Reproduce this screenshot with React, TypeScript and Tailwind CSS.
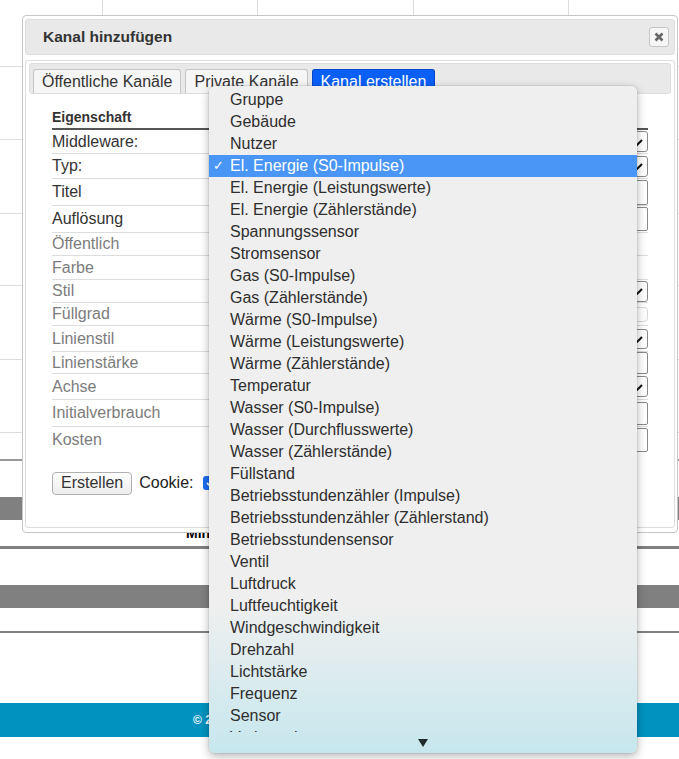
import React from "react";

type Row = {
  label: string;
  h: string;
  muted: boolean;
  ctl: "select" | "input" | "disabled" | "none";
  ch?: string;
};

const rows: Row[] = [
  { label: "Middleware:", h: "h-[24px]", muted: false, ctl: "select", ch: "h-[21px]" },
  { label: "Typ:", h: "h-[25px]", muted: false, ctl: "select", ch: "h-[21px]" },
  { label: "Titel", h: "h-[27px]", muted: false, ctl: "input", ch: "h-[25px]" },
  { label: "Auflösung", h: "h-[27px]", muted: false, ctl: "input", ch: "h-[24px]" },
  { label: "Öffentlich", h: "h-[23px]", muted: true, ctl: "none" },
  { label: "Farbe", h: "h-[24px]", muted: true, ctl: "none" },
  { label: "Stil", h: "h-[23px]", muted: true, ctl: "select", ch: "h-[21px]" },
  { label: "Füllgrad", h: "h-[23px]", muted: true, ctl: "disabled", ch: "h-[15px]" },
  { label: "Linienstil", h: "h-[26px]", muted: true, ctl: "select", ch: "h-[20px]" },
  { label: "Linienstärke", h: "h-[22px]", muted: true, ctl: "input", ch: "h-[22px]" },
  { label: "Achse", h: "h-[26px]", muted: true, ctl: "select", ch: "h-[21px]" },
  { label: "Initialverbrauch", h: "h-[27px]", muted: true, ctl: "input", ch: "h-[23px]" },
  { label: "Kosten", h: "h-[26px]", muted: true, ctl: "input", ch: "h-[24px]" },
];

const options = [
  "Gruppe",
  "Gebäude",
  "Nutzer",
  "El. Energie (S0-Impulse)",
  "El. Energie (Leistungswerte)",
  "El. Energie (Zählerstände)",
  "Spannungssensor",
  "Stromsensor",
  "Gas (S0-Impulse)",
  "Gas (Zählerstände)",
  "Wärme (S0-Impulse)",
  "Wärme (Leistungswerte)",
  "Wärme (Zählerstände)",
  "Temperatur",
  "Wasser (S0-Impulse)",
  "Wasser (Durchflusswerte)",
  "Wasser (Zählerstände)",
  "Füllstand",
  "Betriebsstundenzähler (Impulse)",
  "Betriebsstundenzähler (Zählerstand)",
  "Betriebsstundensensor",
  "Ventil",
  "Luftdruck",
  "Luftfeuchtigkeit",
  "Windgeschwindigkeit",
  "Drehzahl",
  "Lichtstärke",
  "Frequenz",
  "Sensor",
  "Verbrauch",
];

const gridRows = ["h-[67px]", "h-[73px]", "h-[74px]", "h-[72px]", "h-[74px]", "h-[73px]"];

// page behind the dialog
function Page() {
  return (
    <div className="flex flex-col">
      {gridRows.map((h, i) => (
        <div
          key={i}
          className={`grid ${h} grid-cols-[103px_155px_156px_155px_1fr] border-b border-[#dddddd]`}
        >
          <div className="border-r border-[#dddddd]" />
          <div className="border-r border-[#dddddd]" />
          <div className="border-r border-[#dddddd]" />
          <div className="border-r border-[#dddddd]" />
          <div />
        </div>
      ))}
      <div className="h-[26px]" />
      <div className="h-[2px] bg-[#999999]" />
      <div className="h-[36px]" />
      <div className="h-[23px] bg-[#808080]" />
      <div className="flex h-[26px] items-center pl-[186px] text-[14px] font-bold text-black">
        Min
      </div>
      <div className="h-[3px] bg-[#808080]" />
      <div className="h-[36px]" />
      <div className="h-[23px] bg-[#808080]" />
      <div className="h-[23px]" />
      <div className="h-[2px] bg-[#808080]" />
      <div className="h-[70px]" />
      <div className="flex h-[34px] items-center bg-[#0093bf] pl-[193px] text-[12px] font-bold text-white">
        © 2017
      </div>
    </div>
  );
}

function SelectBox({ ch }: { ch: string }) {
  return (
    <div
      className={`relative ${ch} w-[190px] rounded-[3px] border border-[#8a8a8a] bg-white`}
    >
      <svg
        className="absolute right-[3px] top-1/2 -translate-y-1/2"
        width="11"
        height="8"
        viewBox="0 0 11 8"
      >
        <path d="M1 4 L4 7 L9 2" fill="none" stroke="#111" strokeWidth="2" />
      </svg>
    </div>
  );
}

function Control({ row }: { row: Row }) {
  if (row.ctl === "select") return <SelectBox ch={row.ch!} />;
  if (row.ctl === "input")
    return <div className={`${row.ch} w-[190px] rounded-[2px] border border-[#8a8a8a] bg-white`} />;
  if (row.ctl === "disabled")
    return <div className={`${row.ch} w-[190px] rounded-[4px] border border-[#d8d8d8] bg-white`} />;
  return null;
}

function Dialog() {
  return (
    <div className="absolute left-[22px] top-[15px] flex h-[518px] w-[656px] flex-col rounded-[4px] border border-[#c5c5c5] bg-white px-[2px] pb-[4px] pt-[3px]">
      {/* Title bar */}
      <div className="flex h-[36px] items-center justify-between rounded-[3px] border border-[#dddddd] bg-[#e9e9e9] pl-[17px] pr-[5px]">
        <span className="text-[15.5px] font-bold text-[#333333]">Kanal hinzufügen</span>
        <button className="flex h-[20px] w-[20px] items-center justify-center rounded-[3px] border border-[#c5c5c5] bg-[#f6f6f6]">
          <svg width="10" height="10" viewBox="0 0 10 10">
            <path d="M1.5 1.5 L8.5 8.5 M8.5 1.5 L1.5 8.5" stroke="#666" strokeWidth="2.6" />
          </svg>
        </button>
      </div>

      {/* Tabs panel */}
      <div className="mt-[5px] flex flex-1 flex-col rounded-[3px] border border-[#dddddd] px-[3px] pt-[2px]">
        <div className="flex h-[31px] gap-[4px] rounded-[3px] border border-[#dddddd] bg-[#e9e9e9] pl-[3px] pt-[5px]">
          <div className="flex h-[24px] items-center rounded-t-[3px] border border-b-0 border-[#c5c5c5] bg-[#f6f6f6] px-[8px] text-[16px] text-[#333333]">
            Öffentliche Kanäle
          </div>
          <div className="flex h-[24px] items-center rounded-t-[3px] border border-b-0 border-[#c5c5c5] bg-[#f6f6f6] px-[8px] text-[16px] text-[#333333]">
            Private Kanäle
          </div>
          <div className="flex h-[24px] items-center rounded-t-[3px] border border-b-0 border-[#0047cc] bg-[#0a60f6] px-[8px] text-[16px] text-white">
            Kanal erstellen
          </div>
        </div>

        <div className="px-[23px] pt-[12px]">
          <div className="flex h-[24px] items-center border-b-2 border-[#555555] text-[14px] font-bold text-[#333333]">
            Eigenschaft
          </div>
          {rows.map((r, i) => (
            <div
              key={r.label}
              className={`flex ${r.h} items-center justify-between ${
                i < rows.length - 1 ? "border-b border-[#dddddd]" : ""
              }`}
            >
              <span className={`text-[16px] ${r.muted ? "text-[#7c7c7c]" : "text-[#333333]"}`}>
                {r.label}
              </span>
              <Control row={r} />
            </div>
          ))}

          <div className="mt-[18px] flex items-center">
            <button className="flex h-[23px] items-center rounded-[4px] border border-[#b0b0b0] bg-linear-to-b from-white to-[#ececec] px-[8px] text-[16px] text-[#333333]">
              Erstellen
            </button>
            <span className="ml-[7px] text-[16px] text-[#222222]">Cookie:</span>
            <span className="ml-[9px] flex h-[14px] w-[14px] items-center justify-center rounded-[3px] bg-[#1a6ff2]">
              <svg width="10" height="10" viewBox="0 0 10 10">
                <path d="M2 5 L4.2 7.2 L8.2 2.5" fill="none" stroke="white" strokeWidth="1.8" />
              </svg>
            </span>
          </div>
        </div>
      </div>
    </div>
  );
}

function Dropdown() {
  return (
    <div className="absolute left-[209px] top-[86px] flex h-[667px] w-[428px] flex-col overflow-hidden rounded-[6px] bg-linear-to-b from-[#efefef] from-78% to-[#c6e7ee] pt-[3px] shadow-[0_0_0_1px_rgba(0,0,0,0.06),0_3px_10px_rgba(0,0,0,0.3)]">
      <div className="flex-1 overflow-hidden">
        {options.map((o, i) => {
          const sel = i === 3;
          return (
            <div
              key={o}
              className={`flex h-[22px] items-center text-[16px] ${
                sel ? "bg-[#4a96f7] text-white" : "text-[#2e2e2e]"
              }`}
            >
              <span className="w-[21px] pl-[4px] text-[13px] font-['DejaVu_Sans',sans-serif]">
                {sel ? "✓" : ""}
              </span>
              <span>{o}</span>
            </div>
          );
        })}
      </div>
      <div className="flex h-[21px] items-center justify-center">
        <svg width="10" height="8" viewBox="0 0 10 8">
          <path d="M0 0 L10 0 L5 8 Z" fill="#1f2a2c" />
        </svg>
      </div>
    </div>
  );
}

export default function App() {
  return (
    <div className="relative h-[759px] w-[679px] overflow-hidden bg-white font-['Liberation_Sans',Arial,sans-serif] text-[#333333]">
      <Page />
      <Dialog />
      <Dropdown />
    </div>
  );
}
